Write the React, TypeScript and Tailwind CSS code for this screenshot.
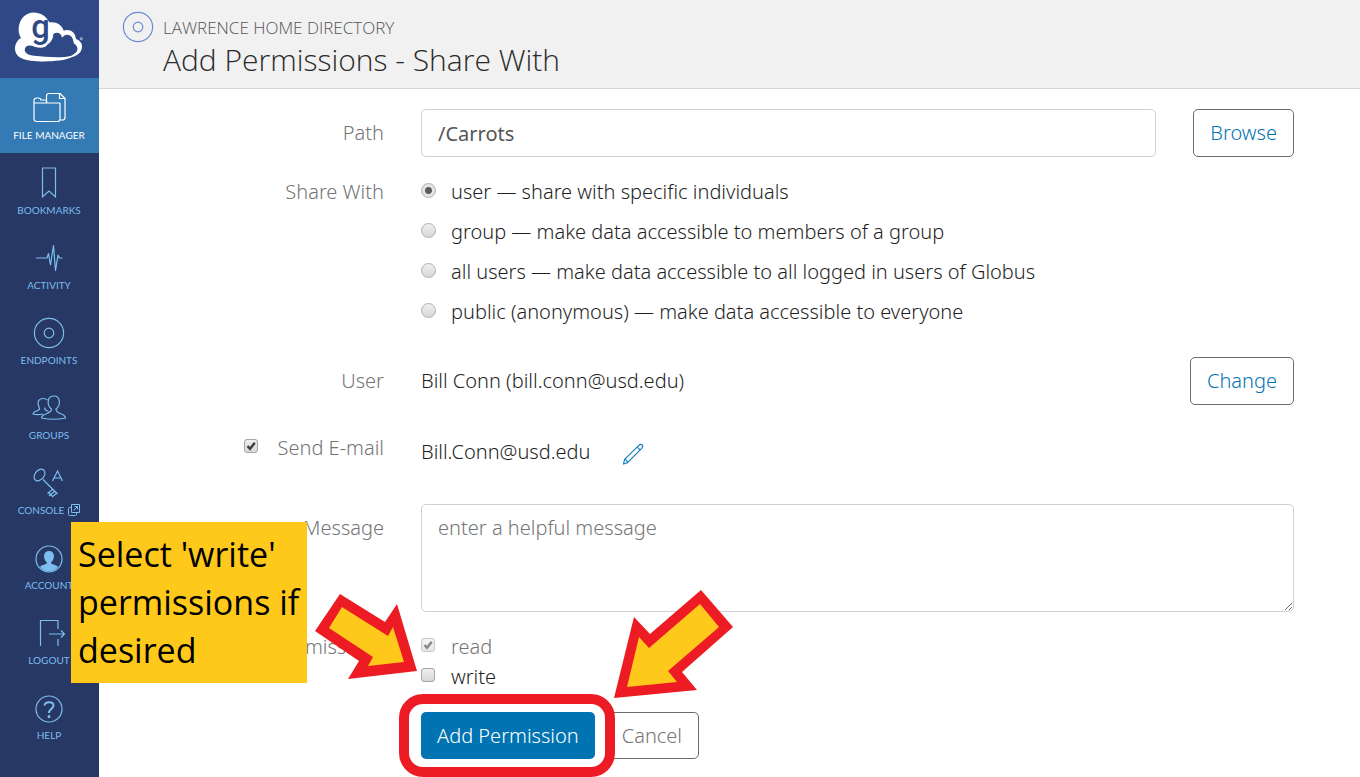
import type { ReactNode } from "react";

const light = { fill: "none", stroke: "currentColor", strokeWidth: 1.2 };

function Disc({ size }: { size: number }) {
  return (
    <svg width={size} height={size} viewBox="0 0 32 32" {...light}>
      <circle cx="16" cy="16" r="14.6" />
      <circle cx="16" cy="16" r="4.8" />
    </svg>
  );
}

function Logo() {
  return (
    <svg width="80" height="60" viewBox="0 0 240 180" role="img" aria-label="Globus">
      <path
        fill="#fff"
        fillRule="evenodd"
        d="M15 128C15 112 24 101 33 96C20 76 26 45 42 31C63 10 104 18 118 49C138 46 156 56 161 74C178 68 196 77 198 99C213 104 220 117 214 132C209 145 197 150 185 154C155 168 95 168 62 164C30 160 15 147 15 128ZM50 120C38 132 44 147 72 149C105 151 150 158 184 149C205 140 209 124 191 112C191 88 169 77 156 95C154 81 141 76 130 84C130 98 124 108 112 116C108 121 102 125 92 125C76 125 62 114 50 120Z"
      />
      <text x="64" y="97" fontSize="98" fontWeight="500" fontFamily="Roboto, sans-serif" fill="#2e4986">
        g
      </text>
      <circle cx="214" cy="98" r="3" fill="none" stroke="#fff" strokeWidth="2" />
    </svg>
  );
}

const icons: Record<string, ReactNode> = {
  files: (
    <svg width="34" height="32" viewBox="0 0 34 32" {...light} strokeLinejoin="round">
      <path d="M2 11V8.500Q2 6 4.500 6H6.500Q8.500 6 9 8H14.500V11" />
      <path d="M2 11H28V27Q28 29.500 25.500 29.500H4.500Q2 29.500 2 27Z" />
      <path d="M14.500 11V4Q14.500 1.500 17 1.500H28L33 6.500V25.500Q33 28 30.500 28H28M27.500 1.500V6.500H33" />
    </svg>
  ),
  bookmark: (
    <svg width="32" height="32" viewBox="0 0 32 32" {...light}>
      <path d="M9.500 1H22.500V30L16 24L9.500 30Z" />
    </svg>
  ),
  activity: (
    <svg width="32" height="32" viewBox="0 0 32 32" {...light} strokeLinejoin="round">
      <path d="M3 16H14L15.500 11.500L17.500 23L20.500 3.500L22.500 28.500L25 13L26.500 16H29.500" />
    </svg>
  ),
  disc: <Disc size={32} />,
  groups: (
    <svg width="36" height="32" viewBox="0 0 36 32" {...light} strokeLinejoin="round">
      <path d="M20.500 17C16 14 15.500 4 22.800 4S29.500 14 25 17C25 23 34 20.500 34.500 26Q22.500 28.500 10.500 26C11 20.500 20.500 23 20.500 17Z" />
      <path d="M16.500 8C13 5.500 7 6 7 11.500C7 14 8.500 15 8.500 16.500C8.500 20 2.500 18 2 22Q6 23.300 12 22M13.500 15.500C13.500 18.500 15.500 18.500 17.500 19.500" />
    </svg>
  ),
  console: (
    <svg width="34" height="32" viewBox="0 0 34 32" {...light}>
      <ellipse cx="7.500" cy="8" rx="4.500" ry="6.500" transform="rotate(40 7.500 8)" />
      <path d="M11 12.500L25.500 27M21 22L15.500 26.500M23 24L17 29M25 26L20 30M16.500 25.500L20 29M20.500 14L25.500 4L30.500 14M22 11H29" />
    </svg>
  ),
  account: (
    <svg width="32" height="32" viewBox="0 0 32 32" {...light}>
      <circle cx="16" cy="17" r="13" />
      <path fill="currentColor" stroke="none" d="M14 20.500C9.500 17 10 9 16 9S22.500 17 18 20.500C18 23 24 22.500 25 25C20 31 12 31 7 25C8 22.500 14 23 14 20.500Z" />
    </svg>
  ),
  logout: (
    <svg width="32" height="32" viewBox="0 0 32 32" {...light}>
      <path d="M7.500 29V3.500H25V12M25 22V29M16 17H31.500M28 13.500L31.500 17L28 20.500" />
    </svg>
  ),
  help: (
    <svg width="32" height="32" viewBox="0 0 32 32" {...light}>
      <circle cx="16" cy="17" r="13" />
      <path strokeWidth="2" d="M11.500 13.500C12 9 20.500 9 20.500 13.500C20.500 16.500 16 17 16 21" />
      <path strokeWidth="2.500" d="M16 23.200V26" />
    </svg>
  ),
};

const nav = [
  { label: "FILE MANAGER", icon: "files" },
  { label: "BOOKMARKS", icon: "bookmark" },
  { label: "ACTIVITY", icon: "activity" },
  { label: "ENDPOINTS", icon: "disc" },
  { label: "GROUPS", icon: "groups" },
  { label: "CONSOLE", icon: "console" },
  { label: "ACCOUNT", icon: "account" },
  { label: "LOGOUT", icon: "logout" },
  { label: "HELP", icon: "help" },
];

function Sidebar() {
  return (
    <nav className="w-[99px] shrink-0 bg-[#263863] text-[#7dbdf0]">
      <a href="#home" className="flex h-[78px] items-start justify-center bg-[#2e4986] pt-1.5">
        <Logo />
      </a>
      {nav.map((item, i) => (
        <a
          key={item.label}
          href={"#" + item.icon}
          className={
            "flex h-[75px] flex-col items-center gap-[3px] pt-3.5 pr-px font-['Lato',sans-serif] text-[10px] leading-4 font-normal " +
            (i === 0 ? "bg-[#347ab5] text-white" : "")
          }
        >
          {icons[item.icon]}
          <span className="flex items-center gap-1 whitespace-nowrap">
            {item.label}
            {item.icon === "console" && (
              <svg width="12" height="12" viewBox="0 0 12 12" fill="none" stroke="currentColor">
                <path d="M3.500 .5H11.500V8.500H3.500ZM3.500 3.500H1.500Q.5 3.500 .5 4.500V10.500Q.5 11.500 1.500 11.500H7.500Q8.500 11.500 8.500 10.500V8.500M5.500 6.500L9 3M6.500 2.500H9.500V5.500" />
              </svg>
            )}
          </span>
        </a>
      ))}
    </nav>
  );
}

function Row({ label, className, children }: { label: ReactNode; className: string; children: ReactNode }) {
  return (
    <div className={"grid grid-cols-[285px_1fr] gap-x-[37px] " + className}>
      <div className="text-right text-[#757575]">{label}</div>
      <div className="min-w-0">{children}</div>
    </div>
  );
}

function Radio({ id, label, checked }: { id: string; label: string; checked?: boolean }) {
  return (
    <div className="flex h-10 items-center gap-[15px]">
      <input
        type="radio"
        id={id}
        name="share"
        defaultChecked={checked}
        className="mb-1 size-[15px] shrink-0 appearance-none rounded-full border border-[#b0b0b0] bg-linear-to-b from-[#eeeeee] to-[#d8d8d8] checked:bg-[radial-gradient(circle,#5c5c5c_0_3px,#e4e4e4_4px)]"
      />
      <label htmlFor={id}>{label}</label>
    </div>
  );
}

function Check({ id, checked, disabled }: { id: string; checked?: boolean; disabled?: boolean }) {
  return (
    <span className={"relative mb-1 size-3.5 shrink-0 " + (disabled ? "opacity-60" : "")}>
      <input
        type="checkbox"
        id={id}
        defaultChecked={checked}
        disabled={disabled}
        className="peer block size-3.5 appearance-none rounded-[3px] border border-[#a5a5a5] bg-linear-to-b from-[#eeeeee] to-[#d8d8d8]"
      />
      <svg className="pointer-events-none absolute inset-0 hidden peer-checked:block" width="14" height="14" viewBox="0 0 14 14">
        <path d="M3.500 7L6 9.800L10.800 3.800" fill="none" stroke="#3c3c3c" strokeWidth="2.400" />
      </svg>
    </span>
  );
}

const outline = "shrink-0 rounded-[5px] border border-[#6c6c6c] bg-white px-4";

export default function App() {
  return (
    <div className="relative flex min-h-screen bg-white font-['Noto_Sans','Open_Sans',sans-serif] text-[20px] leading-7 font-light text-[#1f1f1f]">
      <Sidebar />
      <main className="min-w-0 flex-1">
        <header className="flex h-[89px] gap-[9px] border-b border-[#d6d6d6] bg-[#f1f1f1] pt-[11px] pl-[23px] font-['Open_Sans',sans-serif]">
          <span className="text-[#6c8bd4]">
            <Disc size={32} />
          </span>
          <div>
            <p className="pt-[5px] text-[17px] leading-6 text-[#555555]">LAWRENCE HOME DIRECTORY</p>
            <h1 className="text-[30px] leading-10 text-[#2a2a2a]">Add Permissions - Share With</h1>
          </div>
        </header>

        <form className="pt-5 pr-[66px]" onSubmit={(e) => e.preventDefault()}>
          <Row className="" label={<label htmlFor="path" className="leading-[48px]">Path</label>}>
            <div className="flex gap-[37px]">
              <input
                id="path"
                defaultValue="/Carrots"
                className="h-12 min-w-0 flex-1 rounded-[5px] border border-[#cdd0d8] px-4 font-normal text-[#555555]"
              />
              <button type="button" className={outline + " h-12 text-[#0673b3]"}>Browse</button>
            </div>
          </Row>

          <Row className="mt-[15px]" label={<span className="leading-10">Share With</span>}>
            <Radio id="user" label="user — share with specific individuals" checked />
            <Radio id="group" label="group — make data accessible to members of a group" />
            <Radio id="all" label="all users — make data accessible to all logged in users of Globus" />
            <Radio id="public" label="public (anonymous) — make data accessible to everyone" />
          </Row>

          <Row className="mt-[25px]" label={<span className="leading-[48px]">User</span>}>
            <div className="flex items-center justify-between">
              <span>Bill Conn (bill.conn@usd.edu)</span>
              <button type="button" className={outline + " h-12 text-[#0673b3]"}>Change</button>
            </div>
          </Row>

          <Row
            className="mt-[23px]"
            label={
              <span className="flex h-10 items-center justify-end gap-5">
                <Check id="send" checked />
                <label htmlFor="send">Send E-mail</label>
              </span>
            }
          >
            <div className="flex h-12 items-center gap-8">
              <span>Bill.Conn@usd.edu</span>
              <button type="button" aria-label="Edit e-mail" className="pt-1 text-[#0b7ab8]">
                <svg width="22" height="22" viewBox="0 0 24 24" {...light} strokeLinejoin="round">
                  <path d="M1.500 23L3 17.500L18.500 2.500Q20.500 .8 22 2.200T21.500 5.800L6 21.500ZM3 17.500Q5.500 18.500 6 21.500M16.500 4.500L19.800 7.600" />
                </svg>
              </button>
            </div>
          </Row>

          <Row className="mt-7" label={<label htmlFor="message" className="leading-[48px]">Message</label>}>
            <textarea
              id="message"
              placeholder="enter a helpful message"
              className="block h-[108px] w-full resize rounded-[5px] border border-[#cdd0d8] px-4 py-[9px] placeholder:text-[#757575]"
            />
          </Row>

          <Row className="mt-5" label={<span className="leading-[30px]">Permissions</span>}>
            <div className="flex h-[30px] items-center gap-4">
              <Check id="read" checked disabled />
              <label htmlFor="read" className="text-[#757575]">read</label>
            </div>
            <div className="flex h-[30px] items-center gap-4">
              <Check id="write" />
              <label htmlFor="write">write</label>
            </div>
          </Row>

          <Row className="mt-5 pb-[18px]" label={null}>
            <div className="flex gap-2.5">
              <div className="relative">
                <button type="submit" className="h-[47px] rounded-[5px] bg-[#0074b3] px-4 text-white">Add Permission</button>
                <span className="pointer-events-none absolute -top-[18px] -right-5 -bottom-[18px] -left-[22px] rounded-[24px] border-10 border-[#ed1c24]" />
              </div>
              <button type="button" className={outline + " h-[47px] text-[#757575]"}>Cancel</button>
            </div>
          </Row>
        </form>
      </main>

      <aside className="absolute top-[522px] left-[71px] h-[161px] w-[236px] bg-[#ffc91b] px-[7px] pt-2 font-['Open_Sans',sans-serif] text-[34px] leading-[48px] font-normal whitespace-nowrap text-black">
        Select 'write'
        <br />
        permissions if
        <br />
        desired
      </aside>
      <svg
        className="pointer-events-none absolute top-[588px] left-[312px]"
        width="424"
        height="112"
        viewBox="312 588 424 112"
        aria-hidden="true"
      >
        <path fill="#ed1c24" d="M340 594L385 622L397 604L417 671L348 679L359 661L315 631ZM701 590L733 627L682 672L697 690L614 698L634 617L650 634Z" />
        <path fill="#ffc91b" d="M342 607L388 636L393 627L404 662L368 666L373 657L329 628ZM700 604L719 627L668 671L677 682L627 687L639 637L649 648Z" />
      </svg>
    </div>
  );
}
